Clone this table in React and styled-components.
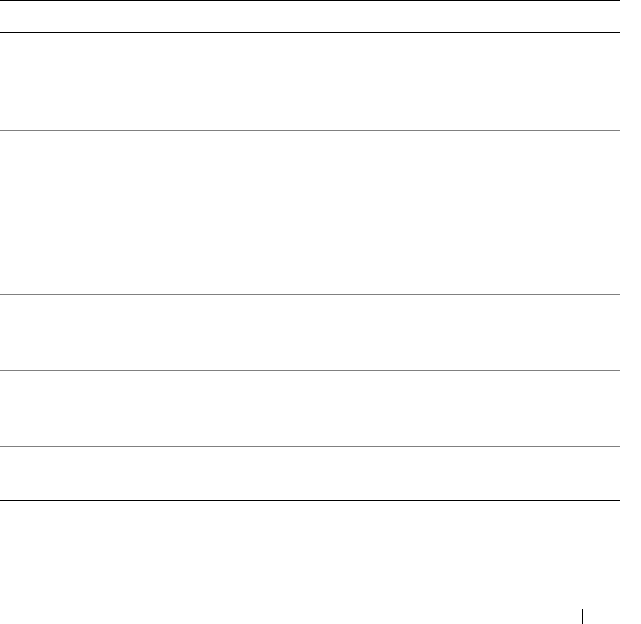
import styled, { createGlobalStyle } from 'styled-components';

const GlobalStyle = createGlobalStyle`
  html, body {
    margin: 0;
    padding: 0;
    background: #ffffff;
    font-family: "Liberation Sans", Arial, sans-serif;
  }
`;

// Página completa
const Page = styled.div`
  width: 641px;
  height: 624px;
  display: flex;
  flex-direction: column;
  overflow: hidden;
`;

// Tabla vacía con bordes horizontales
const Table = styled.div`
  width: 620px;
  border-top: 1px solid #000000;
  display: flex;
  flex-direction: column;
`;

const HeaderRow = styled.div`
  height: 31px;
  border-bottom: 1px solid #000000;
`;

const Row = styled.div`
  height: ${props => props.$h}px;
  border-bottom: 1px solid ${props => (props.$last ? '#000000' : '#808080')};
`;

// Pie de página con la marca vertical
const Footer = styled.div`
  flex: 1;
  display: flex;
  align-items: flex-end;
  padding-left: 582px;
`;

const Tick = styled.div`
  width: 1px;
  height: 15px;
  background: #000000;
`;

const rows = [97, 163, 75, 75, 53];

const App = () => {
  return (
    <>
      <GlobalStyle />
      <Page>
        <Table>
          <HeaderRow />
          {rows.map((h, i) => (
            <Row key={i} $h={h} $last={i === rows.length - 1} />
          ))}
        </Table>
        <Footer>
          <Tick />
        </Footer>
      </Page>
    </>
  );
};

export default App;
